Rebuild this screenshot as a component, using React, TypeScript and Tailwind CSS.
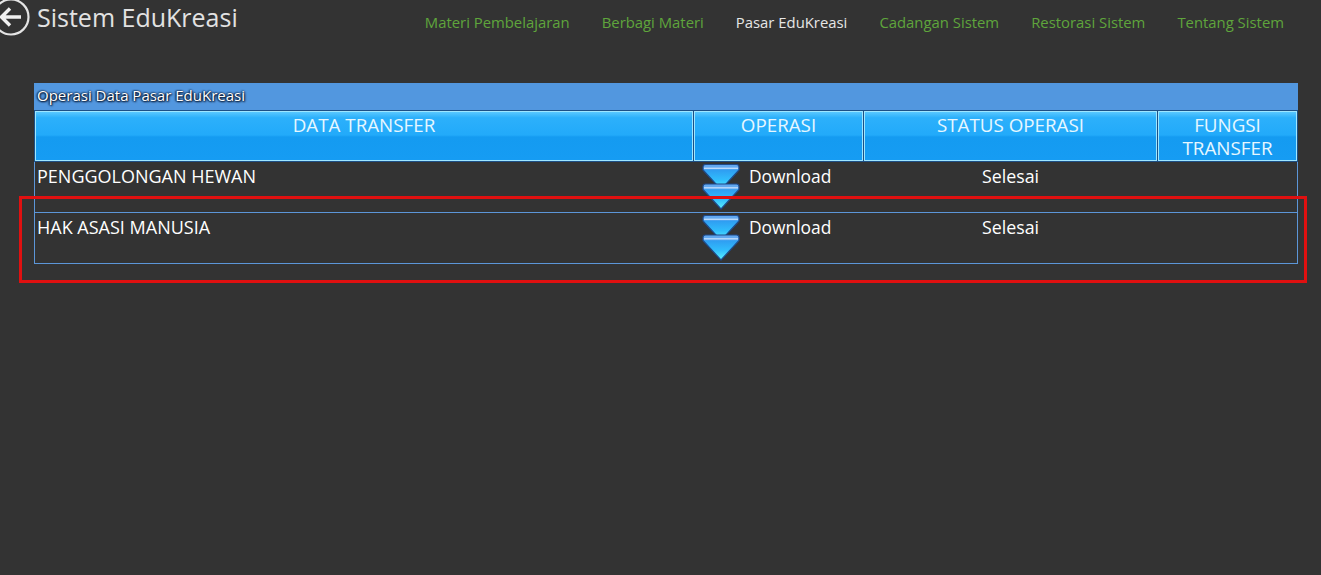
import React from 'react';

const navItems = [
    { label: 'Materi Pembelajaran', active: false },
    { label: 'Berbagi Materi', active: false },
    { label: 'Pasar EduKreasi', active: true },
    { label: 'Cadangan Sistem', active: false },
    { label: 'Restorasi Sistem', active: false },
    { label: 'Tentang Sistem', active: false }
];

const rows = [
    { name: 'PENGGOLONGAN HEWAN', op: 'Download', status: 'Selesai' },
    { name: 'HAK ASASI MANUSIA', op: 'Download', status: 'Selesai' }
];

function BackIcon() {
    return (
        <svg width="38" height="38" viewBox="0 0 38 38" fill="none" className="shrink-0">
            <circle cx="19" cy="19" r="17.5" stroke="#e4e4e4" strokeWidth="2.2" />
            <path d="M29 19H10M18 10.5L9.5 19L18 27.5" stroke="#f0f0f0" strokeWidth="3.4" />
        </svg>
    );
}

function Chevron({ id, y }: { id: string; y: number }) {
    return (
        <g transform={`translate(0 ${y})`}>
            <defs>
                <linearGradient id={id} x1="0" y1="0" x2="0" y2="1">
                    <stop offset="0" stopColor="#62a8f0" />
                    <stop offset="0.16" stopColor="#62a8f0" />
                    <stop offset="0.24" stopColor="#2f9ff2" />
                    <stop offset="0.6" stopColor="#30bcfc" />
                    <stop offset="1" stopColor="#5cf2ff" />
                </linearGradient>
            </defs>
            <path
                d="M1 3Q1 0.5 3.5 0.5H34.5Q37 0.5 37 3V6L19 25.5L1 6Z"
                fill={`url(#${id})`}
                stroke="#1f4a8a"
                strokeWidth="1.2"
                strokeLinejoin="round"
            />
            <rect x="2" y="3.6" width="34" height="1.4" fill="#bcdafb" />
        </g>
    );
}

function DownloadIcon({ id }: { id: string }) {
    return (
        <svg width="38" height="46" viewBox="0 0 38 46" className="shrink-0">
            <Chevron id={`${id}-a`} y={0} />
            <Chevron id={`${id}-b`} y={19.5} />
        </svg>
    );
}

export default function App() {
    return (
        <div className="relative h-[575px] w-[1321px] overflow-hidden bg-[#333333] font-['Open_Sans','Noto_Sans',sans-serif] text-white">
            {/* Header */}
            <div className="flex h-[83px] items-start">
                <div className="-ml-2 -mt-[2px] flex items-center gap-[7px]">
                    <BackIcon />
                    <span className="text-[25px] leading-[38px] text-[#e2e2e2]">Sistem EduKreasi</span>
                </div>
                <nav className="ml-auto mr-[37px] mt-[12px] flex gap-8 text-[14.87px] leading-5">
                    {navItems.map((item) => (
                        <span key={item.label} className={item.active ? 'text-[#e6e6e6]' : 'text-[#5fa53c]'}>
                            {item.label}
                        </span>
                    ))}
                </nav>
            </div>

            {/* Table */}
            <div className="ml-[34px] w-[1264px]">
                <div className="h-[27px] bg-[#5297df] pl-[3px] text-[15px] leading-[25px] [text-shadow:0_0_2px_#04122a,1px_1px_2px_#04122a,-1px_0_2px_#04122a]">
                    Operasi Data Pasar EduKreasi
                </div>
                <div className="flex h-[52px] gap-px bg-[#1d4f85] pl-px pt-px text-center text-[18.8px] leading-[23px] text-[#e6f7ff]">
                    <HeaderCell className="w-[658px]">DATA TRANSFER</HeaderCell>
                    <HeaderCell className="w-[169px]">OPERASI</HeaderCell>
                    <HeaderCell className="w-[293px]">STATUS OPERASI</HeaderCell>
                    <HeaderCell className="w-[139px]">FUNGSI TRANSFER</HeaderCell>
                </div>
                {rows.map((row, i) => (
                    <div
                        key={row.name}
                        className="flex h-[51px] border-x border-b border-[#5c96d8] text-[18px] leading-[28px]"
                    >
                        <div className="w-[659px] pl-[2px]">{row.name}</div>
                        <div className="relative z-10 flex w-[170px] gap-[9px] pl-[8px] pt-[2px]">
                            <DownloadIcon id={`dl-${i}`} />
                            <span className="-mt-[2px] text-[17.4px]">{row.op}</span>
                        </div>
                        <div className="w-[294px] pl-[118px] text-[17.8px]">{row.status}</div>
                        <div className="w-[139px]" />
                    </div>
                ))}
            </div>

            {/* Red annotation */}
            <div className="absolute left-[19px] top-[196px] z-20 h-[87px] w-[1288px] border-[3px] border-[#e01010]" />
        </div>
    );
}

function HeaderCell({ className, children }: { className: string; children: React.ReactNode }) {
    return (
        <div
            className={`${className} h-[50px] border border-[#9fe6ff] bg-[linear-gradient(to_bottom,#59c8ff_0%,#2cb0fb_12%,#22aafa_48%,#149bf1_52%,#169cf3_100%)] px-5 pt-[2px]`}
        >
            {children}
        </div>
    );
}
